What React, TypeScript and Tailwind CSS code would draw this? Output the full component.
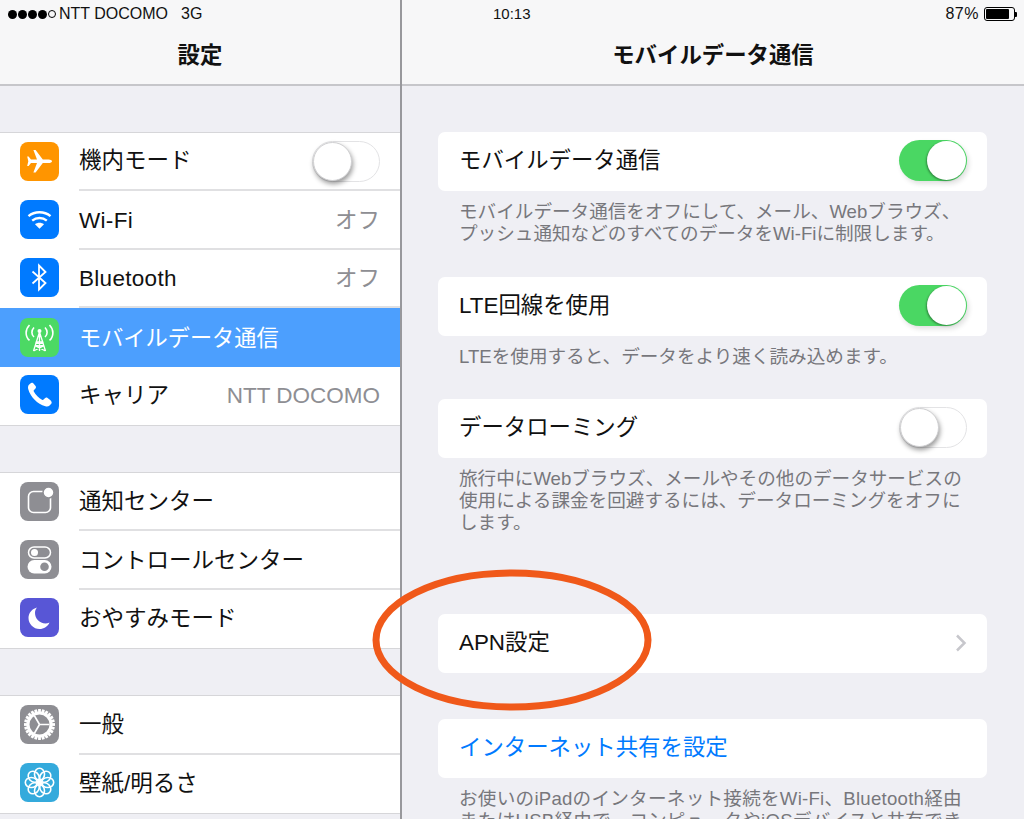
import React from 'react';

const font = "font-['Liberation_Sans','Noto_Sans_CJK_JP',sans-serif]";

const Plane = () => (
  <svg viewBox="0 0 39 39" className="w-[39px] h-[39px]">
    <path fill="#fff" d="M32 19.200c0-1.100-1.600-1.800-3.400-1.800h-5.800L15.600 8h-2.200l3.600 9.400H11L8.600 14.400H7.200l1.100 4.800-1.100 4.800h1.400l2.400-3h6l-3.600 9.400h2.200l7.200-9.400h5.800c1.800 0 3.400-.7 3.400-1.800z" />
  </svg>
);

const Wifi = () => (
  <svg viewBox="0 0 39 39" className="w-[39px] h-[39px]" fill="none" stroke="#fff" strokeWidth="2.400">
    <path d="M8.500 16.200c6.200-5.200 15.800-5.200 22 0" />
    <path d="M12.200 20.600c4.200-3.500 10.400-3.500 14.600 0" />
    <path fill="#fff" stroke="none" d="M15 24.200c2.600-2 6.400-2 9 0l-4.500 4.600z" />
  </svg>
);

const BluetoothIcon = () => (
  <svg viewBox="0 0 39 39" className="w-[39px] h-[39px]" fill="none" stroke="#fff" strokeWidth="1.800">
    <path d="M12.500 13.500l13 11.500-6.500 6.500V7.500l6.500 6.500-13 11.500" />
  </svg>
);

const Antenna = () => (
  <svg viewBox="0 0 39 39" className="w-[39px] h-[39px]" fill="none" stroke="#fff" strokeWidth="1.300">
    <path d="M19.500 14l-6 19M19.500 14l6 19M19.500 14v19M16.500 24h6M14.800 28h9.400M15.500 28l8-4M23.500 28l-8-4M13.500 33l10-5M25.500 33l-10-5" />
    <circle cx="19.500" cy="13" r="2" fill="#fff" stroke="none" />
    <path strokeWidth="1.600" d="M14 9.500c-2.800 3-2.800 7 0 9.500M25 9.500c2.800 3 2.800 7 0 9.500M9.500 7c-4.500 4.500-4.500 11.400 0 15.400M29.500 7c4.500 4.500 4.500 11.400 0 15.400" />
  </svg>
);

const Phone = () => (
  <svg viewBox="0 0 39 39" className="w-[39px] h-[39px]">
    <path fill="#fff" d="M13.200 8.200c-1-.7-2-.6-2.800.2L9 9.800c-1 1-1.200 2.600-.8 4.200 1 4 3.600 7.800 6.400 10.800 3 3 6.600 5.400 10.800 6.400 1.600.4 3.200.2 4.200-.8l1.400-1.400c.8-.8.900-1.800.2-2.800-.8-1.100-2.400-2.400-3.600-3.200-1-.6-1.900-.5-2.700.3l-1.300 1.300c-.5.5-1 .5-1.600.2-1.600-.9-3.200-2.200-4.600-3.600-1.400-1.400-2.700-3-3.600-4.600-.3-.6-.3-1.100.2-1.600l1.300-1.300c.8-.8.900-1.700.3-2.700-.8-1.200-2.100-2.800-3.200-3.600z" />
  </svg>
);

const Notif = () => (
  <svg viewBox="0 0 39 39" className="w-[39px] h-[39px]" fill="none" stroke="#fff" strokeWidth="1.600">
    <rect x="8.500" y="9.500" width="22" height="21" rx="5" />
    <circle cx="28.500" cy="10.500" r="5.500" fill="#fff" stroke="#8e8e93" strokeWidth="1.500" />
  </svg>
);

const Toggles = () => (
  <svg viewBox="0 0 39 39" className="w-[39px] h-[39px]">
    <rect x="8.500" y="7" width="22" height="11" rx="5.500" fill="none" stroke="#fff" strokeWidth="1.500" />
    <circle cx="14.500" cy="12.500" r="3.500" fill="#fff" />
    <rect x="7.500" y="20" width="24" height="13.500" rx="6.700" fill="#fff" />
    <circle cx="24.500" cy="26.700" r="4.300" fill="#8e8e93" />
  </svg>
);

const Moon = () => (
  <svg viewBox="0 0 39 39" className="w-[39px] h-[39px]">
    <path fill="#fff" d="M17 9.500c-5 1.400-8.500 5.500-8.500 10.500 0 6 5 11 11 11 4.400 0 8.300-2.500 10-6.500-1.200.6-2.600.9-4 .9-6 0-10.500-4.800-10.500-10.400 0-2 .7-4 2-5.500z" />
  </svg>
);

const Gear = () => {
  const teeth = Array.from({ length: 24 }, (_, i) => i * 15);
  return (
    <svg viewBox="0 0 39 39" className="w-[39px] h-[39px]" fill="none" stroke="#fff">
      {teeth.map((a) => (
        <rect key={a} x="18.100" y="4" width="2.800" height="4.500" fill="#fff" stroke="none" transform={`rotate(${a} 19.500 19.500)`} />
      ))}
      <circle cx="19.500" cy="19.500" r="11.500" strokeWidth="3" />
      <path strokeWidth="1.700" d="M19.500 19.500h10M19.500 19.500l-5 8.700M19.500 19.500l-5-8.700" />
    </svg>
  );
};

const Flower = () => {
  const petals = Array.from({ length: 8 }, (_, i) => i * 45);
  return (
    <svg viewBox="0 0 39 39" className="w-[39px] h-[39px]" fill="none" stroke="#fff" strokeWidth="1.600">
      {petals.map((a) => (
        <ellipse key={a} cx="19.500" cy="11.300" rx="5" ry="6" transform={`rotate(${a} 19.500 19.500)`} />
      ))}
      <circle cx="19.500" cy="19.500" r="2" fill="#fff" stroke="none" />
    </svg>
  );
};

const Switch = ({ on }: { on: boolean }) =>
  on ? (
    <div className="w-[68px] h-[41px] rounded-full bg-[#4ad763] flex justify-end items-center pr-[1px] shadow-[2px_3px_5px_rgba(0,0,0,0.12)]">
      <div className="w-[39px] h-[39px] rounded-full bg-white shadow-[-1px_1px_2px_rgba(0,0,0,0.35)]" />
    </div>
  ) : (
    <div className="w-[68px] h-[41px] rounded-full bg-white border border-[#e3e3e5] flex items-center">
      <div className="w-[39px] h-[39px] rounded-full bg-white border border-[#d0d0d2] shadow-[1px_3px_5px_rgba(0,0,0,0.4)]" />
    </div>
  );

type Row = { label: string; bg: string; icon: React.ReactNode; value?: string; toggle?: boolean; selected?: boolean };

const groups: Row[][] = [
  [
    { label: '機内モード', bg: 'bg-[#ff9500]', icon: <Plane />, toggle: true },
    { label: 'Wi-Fi', bg: 'bg-[#007aff]', icon: <Wifi />, value: 'オフ' },
    { label: 'Bluetooth', bg: 'bg-[#007aff]', icon: <BluetoothIcon />, value: 'オフ' },
    { label: 'モバイルデータ通信', bg: 'bg-[#4cd964]', icon: <Antenna />, selected: true },
    { label: 'キャリア', bg: 'bg-[#007aff]', icon: <Phone />, value: 'NTT DOCOMO' },
  ],
  [
    { label: '通知センター', bg: 'bg-[#8e8e93]', icon: <Notif /> },
    { label: 'コントロールセンター', bg: 'bg-[#8e8e93]', icon: <Toggles /> },
    { label: 'おやすみモード', bg: 'bg-[#5856d6]', icon: <Moon /> },
  ],
  [
    { label: '一般', bg: 'bg-[#8e8e93]', icon: <Gear /> },
    { label: '壁紙/明るさ', bg: 'bg-[#34aadc]', icon: <Flower /> },
  ],
];

const SettingsRow = ({ row, last }: { row: Row; last: boolean }) => (
  <div className={`h-[58.400px] pl-[20px] flex items-center ${row.selected ? 'bg-[#4c9ffe]' : 'bg-white pb-[2px]'}`}>
    <div className={`w-[39px] h-[39px] rounded-[8px] shrink-0 ${row.bg}`}>{row.icon}</div>
    <div className={`ml-[20px] h-full flex-1 relative flex items-center justify-between pr-[20px] ${row.selected ? 'text-white text-[22.200px]' : 'text-[#111] text-[22.500px]'} ${row.toggle ? '' : 'pt-[2px]'}`}>
      <span className={`whitespace-nowrap ${row.value === 'オフ' ? 'tracking-[0.3px]' : ''}`}>{row.label}</span>
      {row.value && <span className="text-[#8e8e93]">{row.value}</span>}
      {row.toggle && <Switch on={false} />}
      {!row.selected && !last && <div className="absolute left-0 right-0 bottom-[-2px] h-[2px] bg-[#e0e0e2]" />}
    </div>
  </div>
);

const Note = ({ lines, mb, wide }: { lines: string[]; mb: string; wide?: boolean }) => (
  <div className={`mt-[10px] px-[21px] text-[18.600px] leading-[22px] text-[#77777c] whitespace-nowrap ${mb} ${wide ? 'tracking-[0.25px]' : ''}`}>
    {lines.map((l) => (
      <div key={l}>{l}</div>
    ))}
  </div>
);

const Card = ({ children }: { children: React.ReactNode }) => (
  <div className="h-[59px] rounded-[7px] bg-white pl-[21px] pr-[20px] pb-[2px] flex items-center justify-between text-[22.400px] text-[#111]">
    {children}
  </div>
);

export default function App() {
  return (
    <div className={`relative w-[1024px] h-[819px] overflow-hidden flex bg-[#efeff4] ${font}`}>
      <aside className="w-[400px] shrink-0 flex flex-col">
        <header className="h-[86px] shrink-0 bg-[#f7f7f8] border-b-2 border-[#c6c6ca] flex flex-col">
          <div className="h-[28px] pl-[8px] flex items-center text-[16px] text-[#111] whitespace-nowrap">
            <span className="flex items-center gap-[1px] mr-[3px]">
              <i className="w-[9px] h-[9px] rounded-full bg-black" />
              <i className="w-[9px] h-[9px] rounded-full bg-black" />
              <i className="w-[9px] h-[9px] rounded-full bg-black" />
              <i className="w-[9px] h-[9px] rounded-full bg-black" />
              <i className="w-[8px] h-[8px] rounded-full border border-black" />
            </span>
            <span>NTT DOCOMO</span>
            <span className="ml-[13px]">3G</span>
          </div>
          <div className="flex-1 flex items-center justify-center text-[22.400px] font-bold text-[#111] pb-[1px]">設定</div>
        </header>
        <div className="pt-[46px] flex flex-col gap-[46px]">
          {groups.map((g, i) => (
            <div key={i} className="shrink-0 border-y border-[#d6d6d9] bg-white">
              {g.map((r, j) => (
                <SettingsRow key={r.label} row={r} last={j === g.length - 1} />
              ))}
            </div>
          ))}
        </div>
      </aside>
      <div className="w-[2px] shrink-0 bg-[#98989c]" />
      <main className="flex-1 flex flex-col min-w-0">
        <header className="h-[86px] shrink-0 bg-[#f7f7f8] border-b-2 border-[#c6c6ca] flex flex-col">
          <div className="h-[28px] pl-[91px] pr-[7px] flex items-center justify-between text-[15px] text-[#111]">
            <span>10:13</span>
            <span className="flex items-center gap-[5px]">
              <span className="text-[16px] tracking-[0.5px]">87%</span>
              <span className="flex items-center">
                <span className="w-[31px] h-[14px] border border-black rounded-[3px] p-[1px] block">
                  <span className="block w-[87%] h-full bg-black rounded-[1px]" />
                </span>
                <span className="w-[2px] h-[5px] bg-black rounded-r-[1px]" />
              </span>
            </span>
          </div>
          <div className="flex-1 flex items-center justify-center text-[22.400px] font-bold text-[#111] pb-[1px]">モバイルデータ通信</div>
        </header>
        <div className="pt-[46px] pl-[36px] pr-[37px]">
          <Card>
            <span>モバイルデータ通信</span>
            <Switch on />
          </Card>
          <Note mb="mb-[32px]" lines={['モバイルデータ通信をオフにして、メール、Webブラウズ、', 'プッシュ通知などのすべてのデータをWi-Fiに制限します。']} />
          <Card>
            <span>LTE回線を使用</span>
            <Switch on />
          </Card>
          <Note mb="mb-[31px]" lines={['LTEを使用すると、データをより速く読み込めます。']} />
          <Card>
            <span>データローミング</span>
            <Switch on={false} />
          </Card>
          <Note mb="mb-[80px]" lines={['旅行中にWebブラウズ、メールやその他のデータサービスの', '使用による課金を回避するには、データローミングをオフに', 'します。']} />
          <Card>
            <span>APN設定</span>
            <svg viewBox="0 0 12 18" className="w-[12px] h-[18px]" fill="none" stroke="#c7c7cc" strokeWidth="2.500">
              <path d="M2 1.500L9.500 9 2 16.500" />
            </svg>
          </Card>
          <div className="mt-[46px]">
            <Card>
              <span className="text-[#007aff]">インターネット共有を設定</span>
            </Card>
          </div>
          <Note mb="" wide lines={['お使いのiPadのインターネット接続をWi-Fi、Bluetooth経由', 'またはUSB経由で、コンピュータやiOSデバイスと共有でき']} />
        </div>
      </main>
      <svg viewBox="0 0 1024 819" className="absolute inset-0 w-[1024px] h-[819px] pointer-events-none" fill="none">
        <ellipse cx="512" cy="640" rx="136" ry="67" stroke="#f0591a" strokeWidth="7" />
      </svg>
    </div>
  );
}
